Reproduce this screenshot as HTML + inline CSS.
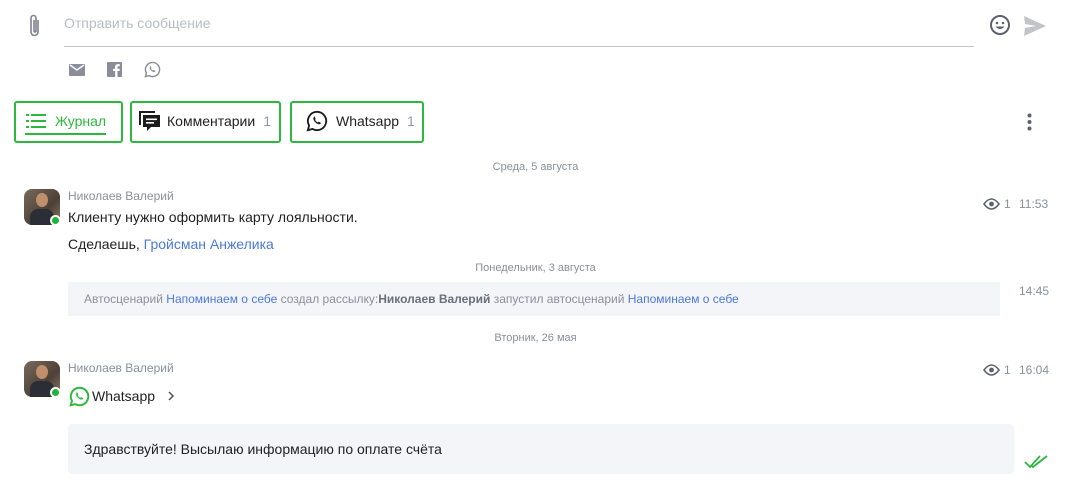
<!DOCTYPE html>
<html><head><meta charset="utf-8">
<style>
*{box-sizing:border-box;margin:0;padding:0}
body{width:1071px;height:491px;background:#fff;font-family:"Liberation Sans",sans-serif;position:relative;overflow:hidden;color:#222}
.a{position:absolute}
.g{color:#8a8f9c}
.lnk{color:#4a78e0}
.tab{position:absolute;top:101px;height:42px;border:2px solid #2db83d;border-radius:3px;font-size:14px;display:flex;align-items:center;padding-bottom:3px}
.av{position:absolute;width:36px;height:36px;border-radius:8px;background:linear-gradient(135deg,#7a6a5a,#4c4038 60%,#8c7a66);overflow:hidden}
.dot{position:absolute;width:11px;height:11px;border-radius:50%;background:#20b33a;border:2px solid #fff}
.date{position:absolute;left:0;width:1071px;text-align:center;font-size:11px;color:#8a8f9c}
</style></head><body>
<svg class="a" style="left:27px;top:13px" width="16" height="26" viewBox="0 0 16 26"><path d="M11 7v12a3.5 3.5 0 0 1-7 0V5a2.5 2.5 0 0 1 5 0v13a1 1 0 0 1-2 0V7" fill="none" stroke="#7d8190" stroke-width="1.6"/></svg>
<div class="a" style="left:64px;top:15px;font-size:14px;color:#b8bcc4">Отправить сообщение</div>
<div class="a" style="left:64px;top:46px;width:910px;height:1px;background:#c4c6cc"></div>
<svg class="a" style="left:989px;top:14px" width="22" height="22" viewBox="0 0 22 22"><circle cx="11" cy="11" r="9" fill="none" stroke="#5e6270" stroke-width="2"/><circle cx="8" cy="9" r="1.3" fill="#5e6270"/><circle cx="14" cy="9" r="1.3" fill="#5e6270"/><path d="M6.5 12.5q4.5 5 9 0z" fill="#5e6270"/></svg>
<svg class="a" style="left:1024px;top:16px" width="22" height="20" viewBox="0 0 22 20"><path d="M0 0L22 10L0 20L1 12L12 10L1 8Z" fill="#c2c4ca"/></svg>
<svg class="a" style="left:69px;top:64px" width="16" height="12" viewBox="0 0 16 12"><rect width="16" height="12" rx="1" fill="#8a8d99"/><path d="M1 1l7 5 7-5" fill="none" stroke="#fff" stroke-width="1.5"/></svg>
<svg class="a" style="left:107px;top:62px" width="15" height="15" viewBox="0 0 15 15"><rect width="15" height="15" rx="1" fill="#8a8d99"/><path d="M10.5 15V9h2l.3-2.3h-2.3V5.4c0-.7.2-1.1 1.1-1.1h1.2V2.2c-.2 0-1-.1-1.8-.1-1.8 0-2.9 1-2.9 3v1.6H6.1V9h2v6z" fill="#fff"/></svg>
<svg class="a" style="left:144px;top:61px" width="17" height="17" viewBox="0 0 24 24"><path d="M12 2a10 10 0 0 0-8.6 15L2 22l5.1-1.3A10 10 0 1 0 12 2z" fill="none" stroke="#8a8d99" stroke-width="2"/><path d="M8.5 7.5c.5-.5 1-.3 1.2.2l.8 1.8c.1.4-.3.8-.6 1.1.6 1.3 1.6 2.3 2.9 2.9.3-.3.7-.8 1.1-.6l1.8.8c.5.2.6.7.2 1.2-1.5 1.8-5.5-.4-7.3-3.5-.8-1.4-.6-3 0-3.9z" fill="#8a8d99"/></svg>
<div class="tab" style="left:14px;width:109px;color:#2db83d">
<svg style="margin-left:10px" width="20" height="16" viewBox="0 0 20 16"><g fill="#2db83d"><rect x="0" y="1" width="3" height="2"/><rect x="5" y="1" width="15" height="2"/><rect x="0" y="7" width="3" height="2"/><rect x="5" y="7" width="15" height="2"/><rect x="0" y="13" width="3" height="2"/><rect x="5" y="13" width="15" height="2"/></g></svg>
<span style="margin-left:9px">Журнал</span>
<div class="a" style="left:9px;top:30px;width:81px;height:2px;background:#2db83d"></div></div>
<div class="tab" style="left:130px;width:151px">
<svg style="margin-left:6px" width="23" height="22" viewBox="0 0 23 22"><path d="M1 1h16v2H3v12H1z" fill="#1c1c1c"/><path d="M5 5h17v12h-9l-4 4v-4H5z" fill="#1c1c1c"/><rect x="8" y="8.5" width="11" height="1.6" fill="#fff"/><rect x="8" y="12" width="8" height="1.6" fill="#fff"/></svg>
<span style="margin-left:6px">Комментарии</span><span style="margin-left:8px;color:#8c97b0">1</span></div>
<div class="tab" style="left:290px;width:134px">
<svg style="margin-left:14px" width="22" height="22" viewBox="0 0 24 24"><path d="M12 2a10 10 0 0 0-8.6 15L2 22l5.1-1.3A10 10 0 1 0 12 2z" fill="none" stroke="#1c1c1c" stroke-width="2"/><path d="M8.5 7.5c.5-.5 1-.3 1.2.2l.8 1.8c.1.4-.3.8-.6 1.1.6 1.3 1.6 2.3 2.9 2.9.3-.3.7-.8 1.1-.6l1.8.8c.5.2.6.7.2 1.2-1.5 1.8-5.5-.4-7.3-3.5-.8-1.4-.6-3 0-3.9z" fill="#1c1c1c"/></svg>
<span style="margin-left:8px">Whatsapp</span><span style="margin-left:8px;color:#8c97b0">1</span></div>
<svg class="a" style="left:1027px;top:113px" width="5" height="18" viewBox="0 0 5 18"><g fill="#5e6270"><circle cx="2.5" cy="2.5" r="2"/><circle cx="2.5" cy="9" r="2"/><circle cx="2.5" cy="15.5" r="2"/></g></svg>

<div class="date" style="top:161px">Среда, 5 августа</div>
<div class="av" style="left:24px;top:189px"><div class="a" style="left:12px;top:4px;width:12px;height:14px;border-radius:50%;background:#c08f6c"></div><div class="a" style="left:6px;top:20px;width:24px;height:18px;border-radius:8px 8px 0 0;background:#2b2e36"></div></div>
<div class="dot" style="left:50px;top:215px"></div>
<div class="a g" style="left:68px;top:189px;font-size:12px">Николаев Валерий</div>
<div class="a" style="left:68px;top:209px;font-size:14px">Клиенту нужно оформить карту лояльности.</div>
<div class="a" style="left:68px;top:236px;font-size:14px">Сделаешь, <span class="lnk">Гройсман Анжелика</span></div>
<svg class="a" style="left:983px;top:198px" width="17" height="12" viewBox="0 0 17 12"><path d="M1 6q7.5-10 15 0q-7.5 10-15 0z" fill="none" stroke="#5e6270" stroke-width="1.6"/><circle cx="8.5" cy="6" r="2.4" fill="#5e6270"/></svg>
<div class="a g" style="left:1004px;top:197px;font-size:12px">1</div>
<div class="a g" style="left:1019px;top:197px;font-size:12px">11:53</div>

<div class="date" style="top:262px">Понедельник, 3 августа</div>
<div class="a" style="left:68px;top:282px;width:932px;height:34px;background:#f4f5f9"></div>
<div class="a g" style="left:84px;top:292px;font-size:12px">Автосценарий <span class="lnk">Напоминаем о себе</span> создал рассылку:<b style="color:#6a6f7c">Николаев Валерий</b> запустил автосценарий <span class="lnk">Напоминаем о себе</span></div>
<div class="a g" style="left:1019px;top:284px;font-size:12px">14:45</div>

<div class="date" style="top:332px">Вторник, 26 мая</div>
<div class="av" style="left:24px;top:361px"><div class="a" style="left:12px;top:4px;width:12px;height:14px;border-radius:50%;background:#c08f6c"></div><div class="a" style="left:6px;top:20px;width:24px;height:18px;border-radius:8px 8px 0 0;background:#2b2e36"></div></div>
<div class="dot" style="left:50px;top:387px"></div>
<div class="a g" style="left:68px;top:361px;font-size:12px">Николаев Валерий</div>
<svg class="a" style="left:69px;top:386px" width="21" height="21" viewBox="0 0 24 24"><path d="M12 2a10 10 0 0 0-8.6 15L2 22l5.1-1.3A10 10 0 1 0 12 2z" fill="none" stroke="#2db83d" stroke-width="2.2"/><path d="M8.5 7.5c.5-.5 1-.3 1.2.2l.8 1.8c.1.4-.3.8-.6 1.1.6 1.3 1.6 2.3 2.9 2.9.3-.3.7-.8 1.1-.6l1.8.8c.5.2.6.7.2 1.2-1.5 1.8-5.5-.4-7.3-3.5-.8-1.4-.6-3 0-3.9z" fill="#2db83d"/></svg>
<div class="a" style="left:92px;top:388px;font-size:14px">Whatsapp</div>
<svg class="a" style="left:168px;top:391px" width="7" height="10" viewBox="0 0 7 10"><path d="M1 1l4 4-4 4" fill="none" stroke="#555" stroke-width="1.5"/></svg>
<svg class="a" style="left:983px;top:364px" width="17" height="12" viewBox="0 0 17 12"><path d="M1 6q7.5-10 15 0q-7.5 10-15 0z" fill="none" stroke="#5e6270" stroke-width="1.6"/><circle cx="8.5" cy="6" r="2.4" fill="#5e6270"/></svg>
<div class="a g" style="left:1004px;top:363px;font-size:12px">1</div>
<div class="a g" style="left:1019px;top:363px;font-size:12px">16:04</div>
<div class="a" style="left:68px;top:424px;width:946px;height:50px;background:#f4f5f9;border-radius:4px"></div>
<div class="a" style="left:84px;top:441px;font-size:14px">Здравствуйте! Высылаю информацию по оплате счёта</div>
<svg class="a" style="left:1024px;top:455px" width="24" height="14" viewBox="0 0 24 14"><path d="M1 7l5 5L16 1M8 11l1 1L23 1" fill="none" stroke="#2db83d" stroke-width="1.8"/></svg>
</body></html>
